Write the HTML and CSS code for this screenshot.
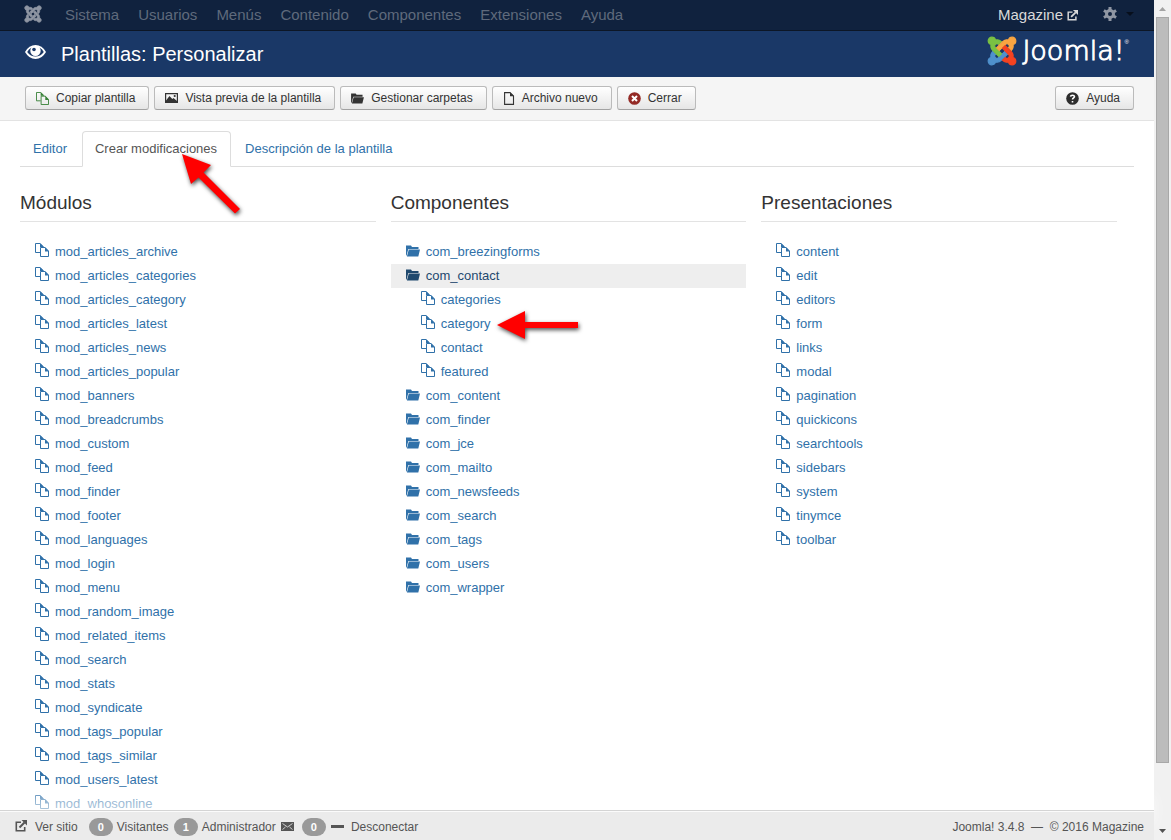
FILE: index.html
```html
<!DOCTYPE html>
<html lang="es">
<head>
<meta charset="utf-8">
<title>Plantillas: Personalizar</title>
<link rel="stylesheet" href="styles.css">
</head>
<body>
<svg class="sprite" aria-hidden="true">
  <defs><path id="arm" d="M16.719 14.759L14.22 17.26l-2.37 2.37-.462.466c-1.368 1.365-3.297 1.83-5.047 1.397-.327 1.424-1.604 2.49-3.13 2.49C1.438 23.983 0 22.547 0 20.772c0-1.518 1.055-2.789 2.469-3.123-.446-1.76.016-3.705 1.396-5.08l.179-.18 2.37 2.37-.184.181c-.769.779-.769 2.024 0 2.789.771.78 2.022.78 2.787 0l.465-.465 2.367-2.371 2.502-2.506z"/></defs>
  <symbol id="copy" viewBox="0 0 14 14"><path fill="none" stroke="currentColor" d="M5 9.500H.5v-9h4.500L8 3.500M5.500 13.500v-9H10l3.500 3.500v5.500z"/><path fill="currentColor" d="M5 0l4 4H5zM10 4l4 4.500h-4z"/></symbol>
  <symbol id="folder" viewBox="0 0 14 12"><path fill="currentColor" d="M0 .5h5l1 1.500h6.500V4H2.300L.6 10.500H0zM2.800 4.600H14L12.300 11.500H.9z"/></symbol>
  <symbol id="out" viewBox="0 0 12 12"><path fill="none" stroke="currentColor" stroke-width="1.600" d="M6 2.300H1.300v8.400h8.400V7"/><path fill="none" stroke="currentColor" stroke-width="2" d="M4.500 7.500L9.500 2.500"/><path fill="currentColor" d="M6.500 0H12v5.500z"/></symbol>
</svg>
<div class="window">
  <div class="page">
    <nav class="navbar">
      <a class="brand" href="#" aria-label="Joomla"><svg width="18" height="18" viewBox="-1 -1 26 26"><use href="#arm"/><use href="#arm" transform="rotate(90 12 12)"/><use href="#arm" transform="rotate(180 12 12)"/><use href="#arm" transform="rotate(270 12 12)"/></svg></a>
      <div class="menu"><a href="#">Sistema</a><a href="#">Usuarios</a><a href="#">Menús</a><a href="#">Contenido</a><a href="#">Componentes</a><a href="#">Extensiones</a><a href="#">Ayuda</a></div>
      <a class="site" href="#">Magazine <svg width="11" height="11"><use href="#out"/></svg></a>
      <button class="gear" aria-label="Usuario"><svg width="14" height="14" viewBox="0 0 14 14"><path fill="none" stroke="currentColor" stroke-width="3" d="M7 3.500a3.500 3.500 0 1 0 0 7 3.500 3.500 0 0 0 0-7z"/><path fill="none" stroke="currentColor" stroke-width="3" d="M7 0v3M7 11v3M.9 3.500l2.600 1.500M10.500 9l2.600 1.500M.9 10.500L3.500 9M10.500 5l2.600-1.500"/></svg><svg class="caret" width="8" height="4" viewBox="0 0 8 4"><path d="M0 0h8L4 4z"/></svg></button>
    </nav>
    <header class="header">
      <svg class="eye" width="21" height="14" viewBox="0 0 21 14"><path fill="#fff" d="M0 7Q4 0 10.500 0T21 7Q17 14 10.500 14T0 7z"/><path fill="#1a3867" d="M6.500 2.500Q3.500 4 2.200 7q3.300 4.500 8.300 4.500T18.800 7Q17.500 4 14.500 2.500q1.200 1.500 1.200 3.200a5.200 5.200 0 0 1-10.400 0q0-1.700 1.200-3.200z"/><circle cx="9" cy="4.500" r="1.800" fill="#1a3867"/></svg>
      <h1>Plantillas: Personalizar</h1>
      <div class="logo"><svg class="mark" width="30" height="30" viewBox="-1 -1 26 26"><use href="#arm" color="#4f91cd"/><use href="#arm" color="#7ac143" transform="rotate(90 12 12)"/><use href="#arm" color="#f9a541" transform="rotate(180 12 12)"/><use href="#arm" color="#f44321" transform="rotate(270 12 12)"/></svg><span>Joomla!</span><sup>®</sup></div>
    </header>
    <div class="toolbar">
      <button><svg class="green" width="13" height="13"><use href="#copy"/></svg>Copiar plantilla</button>
      <button><svg width="13" height="10" viewBox="0 0 13 10"><path fill="none" stroke="currentColor" stroke-width="1.200" d="M.6.6h11.800v8.800H.6z"/><path fill="currentColor" d="M1 9V7.500L4.500 3l2.800 3 1.200-1L12 8v1z"/><circle cx="9.700" cy="3" r="1.100" fill="currentColor"/></svg>Vista previa de la plantilla</button>
      <button><svg width="13" height="11"><use href="#folder"/></svg>Gestionar carpetas</button>
      <button><svg width="12" height="13" viewBox="0 0 12 13"><path fill="none" stroke="currentColor" stroke-width="1.100" d="M1.600.6H7L10.500 4v8.400H1.600z"/><path fill="currentColor" d="M7 .2L11 4.200H7z"/></svg>Archivo nuevo</button>
      <button><svg width="13" height="13" viewBox="0 0 13 13"><circle cx="6.500" cy="6.500" r="6.300" fill="#942a25"/><path stroke="#fff" stroke-width="2" d="M4 4l5 5M9 4L4 9"/></svg>Cerrar</button>
      <button class="help"><svg width="13" height="13" viewBox="0 0 13 13"><circle cx="6.500" cy="6.500" r="6.300" fill="#2d2d2d"/><path fill="none" stroke="#fff" stroke-width="1.600" d="M4.500 4.700q.2-1.400 2-1.400t2 1.300c0 1.300-2 1.300-2 3M6.500 8.900v1.500"/></svg>Ayuda</button>
    </div>
    <main class="content">
      <div class="tabs">
        <a href="#">Editor</a>
        <a href="#" class="active">Crear modificaciones<svg class="arrow arrow-tab" width="70" height="70" viewBox="0 0 70 70"><path fill="red" d="M3 3L32 14 24.500 21.500 61 58 56 62.500 19.500 26.500 12 33z"/></svg></a>
        <a href="#">Descripción de la plantilla</a>
      </div>
      <div class="columns">
        <section>
          <h2>Módulos</h2>
          <ul>
            <li><a href="#"><svg><use href="#copy"/></svg>mod_articles_archive</a></li>
            <li><a href="#"><svg><use href="#copy"/></svg>mod_articles_categories</a></li>
            <li><a href="#"><svg><use href="#copy"/></svg>mod_articles_category</a></li>
            <li><a href="#"><svg><use href="#copy"/></svg>mod_articles_latest</a></li>
            <li><a href="#"><svg><use href="#copy"/></svg>mod_articles_news</a></li>
            <li><a href="#"><svg><use href="#copy"/></svg>mod_articles_popular</a></li>
            <li><a href="#"><svg><use href="#copy"/></svg>mod_banners</a></li>
            <li><a href="#"><svg><use href="#copy"/></svg>mod_breadcrumbs</a></li>
            <li><a href="#"><svg><use href="#copy"/></svg>mod_custom</a></li>
            <li><a href="#"><svg><use href="#copy"/></svg>mod_feed</a></li>
            <li><a href="#"><svg><use href="#copy"/></svg>mod_finder</a></li>
            <li><a href="#"><svg><use href="#copy"/></svg>mod_footer</a></li>
            <li><a href="#"><svg><use href="#copy"/></svg>mod_languages</a></li>
            <li><a href="#"><svg><use href="#copy"/></svg>mod_login</a></li>
            <li><a href="#"><svg><use href="#copy"/></svg>mod_menu</a></li>
            <li><a href="#"><svg><use href="#copy"/></svg>mod_random_image</a></li>
            <li><a href="#"><svg><use href="#copy"/></svg>mod_related_items</a></li>
            <li><a href="#"><svg><use href="#copy"/></svg>mod_search</a></li>
            <li><a href="#"><svg><use href="#copy"/></svg>mod_stats</a></li>
            <li><a href="#"><svg><use href="#copy"/></svg>mod_syndicate</a></li>
            <li><a href="#"><svg><use href="#copy"/></svg>mod_tags_popular</a></li>
            <li><a href="#"><svg><use href="#copy"/></svg>mod_tags_similar</a></li>
            <li><a href="#"><svg><use href="#copy"/></svg>mod_users_latest</a></li>
            <li><a href="#"><svg><use href="#copy"/></svg>mod_whosonline</a></li>
          </ul>
        </section>
        <section>
          <h2>Componentes</h2>
          <ul>
            <li><a href="#" class="dir"><svg><use href="#folder"/></svg>com_breezingforms</a></li>
            <li><a href="#" class="dir open"><svg><use href="#folder"/></svg>com_contact</a>
              <ul class="nested">
                <li><a href="#"><svg><use href="#copy"/></svg>categories</a></li>
                <li><a href="#"><svg><use href="#copy"/></svg>category<span class="anchor"><svg class="arrow arrow-item" width="90" height="36" viewBox="0 0 90 36"><path fill="red" d="M3 18L31 4v11h53v6H31v11z"/></svg></span></a></li>
                <li><a href="#"><svg><use href="#copy"/></svg>contact</a></li>
                <li><a href="#"><svg><use href="#copy"/></svg>featured</a></li>
              </ul>
            </li>
            <li><a href="#" class="dir"><svg><use href="#folder"/></svg>com_content</a></li>
            <li><a href="#" class="dir"><svg><use href="#folder"/></svg>com_finder</a></li>
            <li><a href="#" class="dir"><svg><use href="#folder"/></svg>com_jce</a></li>
            <li><a href="#" class="dir"><svg><use href="#folder"/></svg>com_mailto</a></li>
            <li><a href="#" class="dir"><svg><use href="#folder"/></svg>com_newsfeeds</a></li>
            <li><a href="#" class="dir"><svg><use href="#folder"/></svg>com_search</a></li>
            <li><a href="#" class="dir"><svg><use href="#folder"/></svg>com_tags</a></li>
            <li><a href="#" class="dir"><svg><use href="#folder"/></svg>com_users</a></li>
            <li><a href="#" class="dir"><svg><use href="#folder"/></svg>com_wrapper</a></li>
          </ul>
        </section>
        <section>
          <h2>Presentaciones</h2>
          <ul>
            <li><a href="#"><svg><use href="#copy"/></svg>content</a></li>
            <li><a href="#"><svg><use href="#copy"/></svg>edit</a></li>
            <li><a href="#"><svg><use href="#copy"/></svg>editors</a></li>
            <li><a href="#"><svg><use href="#copy"/></svg>form</a></li>
            <li><a href="#"><svg><use href="#copy"/></svg>links</a></li>
            <li><a href="#"><svg><use href="#copy"/></svg>modal</a></li>
            <li><a href="#"><svg><use href="#copy"/></svg>pagination</a></li>
            <li><a href="#"><svg><use href="#copy"/></svg>quickicons</a></li>
            <li><a href="#"><svg><use href="#copy"/></svg>searchtools</a></li>
            <li><a href="#"><svg><use href="#copy"/></svg>sidebars</a></li>
            <li><a href="#"><svg><use href="#copy"/></svg>system</a></li>
            <li><a href="#"><svg><use href="#copy"/></svg>tinymce</a></li>
            <li><a href="#"><svg><use href="#copy"/></svg>toolbar</a></li>
          </ul>
        </section>
      </div>
    </main>
    <footer class="status">
      <a class="view" href="#"><svg width="12" height="12"><use href="#out"/></svg>Ver sitio</a>
      <span class="count"><b>0</b>Visitantes</span>
      <span class="count"><b>1</b>Administrador</span>
      <a class="mail" href="#"><svg width="13" height="9" viewBox="0 0 13 9"><path fill="#555" d="M0 0h13v9H0z"/><path fill="none" stroke="#ebebeb" stroke-width=".8" d="M1.500 1.500l5 3.500 5-3.500M1.500 7.500l3-2.500M11.500 7.500l-3-2.500"/></svg><b>0</b></a>
      <a class="logout" href="#"><svg width="13" height="3" viewBox="0 0 13 3"><path fill="#555" d="M0 0h13v3H0z"/></svg>Desconectar</a>
      <span class="version">Joomla! 3.4.8 &nbsp;—&nbsp; © 2016 Magazine</span>
    </footer>
  </div>
  <div class="scrollbar" aria-hidden="true">
    <svg width="7" height="4" viewBox="0 0 7 4"><path fill="#a3a3a3" d="M0 4h7L3.500 0z"/></svg>
    <div class="track"><div class="thumb"></div></div>
    <svg width="7" height="4" viewBox="0 0 7 4"><path fill="#505050" d="M0 0h7L3.500 4z"/></svg>
  </div>
</div>
</body>
</html>
```
FILE: styles.css
```css
* { box-sizing: border-box; }
body {
  margin: 0;
  font: 13px/18px "Liberation Sans", Arial, sans-serif;
  color: #333;
  background: #fff;
}
a { color: #3071a9; text-decoration: none; }
svg { flex: none; }
button { font: inherit; cursor: pointer; }
h1, h2 { margin: 0; font-weight: normal; }
ul { margin: 0; padding: 0; list-style: none; }
.sprite { position: absolute; width: 0; height: 0; }

.window { display: flex; height: 100vh; overflow: hidden; }
.page { flex: 1; min-width: 0; display: flex; flex-direction: column; }

.navbar {
  flex: none;
  display: flex;
  align-items: center;
  height: 31px;
  padding: 0 20px 0 24px;
  background: #10223e;
  border-bottom: 1px solid #0c1626;
  font-size: 15px;
}
.brand { display: flex; margin: 0 23px 2px 0; fill: #8f96a3; stroke: #8f96a3; stroke-width: 1; }
.menu { display: flex; gap: 19px; }
.menu a { color: #5f6a7c; }
.site { display: flex; align-items: center; gap: 4px; margin-left: auto; color: #d9d9d9; }
.gear {
  display: flex;
  align-items: center;
  gap: 9px;
  margin: 0 0 2px 25px;
  padding: 0;
  border: 0;
  background: none;
  color: #8f96a3;
}
.caret { fill: #070f1c; }

.header {
  flex: none;
  display: flex;
  align-items: center;
  height: 46px;
  padding: 0 25px;
  background: #1a3867;
  color: #fff;
}
.eye { margin: 0 15px 4px 0; }
.header h1 { font-size: 20px; line-height: 30px; }
.logo { display: flex; align-items: center; height: 40px; margin-left: auto; padding-bottom: 6px; }
.mark use { fill: currentColor; stroke: currentColor; stroke-width: 1; }
.logo span {
  margin-left: 5px;
  font: 200 27px/30px "DejaVu Sans", sans-serif;
  -webkit-text-stroke: 1px #fff;
}
.logo sup { align-self: flex-start; font-size: 6px; line-height: 16px; }

.toolbar {
  flex: none;
  display: flex;
  gap: 5px;
  height: 44px;
  padding: 9px 20px 9px 25px;
  background: #f5f5f5;
  border-bottom: 1px solid #e3e3e3;
}
.toolbar button {
  display: flex;
  align-items: center;
  gap: 7px;
  height: 24px;
  padding: 0 13px 0 10px;
  border: 1px solid #bbb;
  border-bottom-color: #a2a2a2;
  border-radius: 3px;
  background: linear-gradient(#fff, #e6e6e6);
  color: #333;
  font-size: 12px;
}
.toolbar .green { color: #378137; }
.toolbar .help { margin-left: auto; }

.content { flex: 1; min-height: 0; padding: 10px 20px 0; }
.tabs { display: flex; height: 36px; border-bottom: 1px solid #ddd; }
.tabs a { position: relative; height: 36px; padding: 8px 13px 8px 12px; border: 1px solid transparent; }
.tabs a + a { margin-left: 1px; }
.tabs .active {
  border-color: #ddd #ddd #fff;
  border-radius: 4px 4px 0 0;
  background: #fff;
  color: #555;
}
.arrow { position: absolute; z-index: 2; filter: drop-shadow(1px 2px 2px rgba(0, 0, 0, .7)); }
.arrow-tab { top: 19px; left: 96px; }

.columns {
  display: grid;
  grid-template-columns: repeat(3, minmax(0, 1fr));
  gap: 15px;
  padding: 18px 17px 0 0;
}
h2 {
  height: 37px;
  margin-bottom: 18px;
  border-bottom: 1px solid #e3e3e3;
  font-size: 19px;
  line-height: 36px;
}
li a { display: flex; align-items: center; height: 24px; padding-left: 15px; }
li a > svg { width: 14px; height: 14px; margin: 0 6px 4px 0; }
.dir > svg { margin-bottom: 2px; }
.open { background: #eee; color: #1f496e; }
.nested a { padding-left: 30px; }
.anchor { position: relative; }
.arrow-item { top: -17px; left: 3px; }

.status {
  position: relative;
  flex: none;
  display: flex;
  align-items: center;
  height: 30px;
  padding: 3px 10px 0 15px;
  border-top: 1px solid #d4d4d4;
  background: #ebebeb;
  box-shadow: 0 1px 0 rgba(255, 255, 255, .8) inset, 0 -15px 15px rgba(255, 255, 255, .6);
  color: #555;
  font-size: 12px;
}
.status a { color: #555; }
.status a, .count { display: flex; align-items: center; }
.status b {
  padding: 0 9px;
  border-radius: 9px;
  background: #999;
  color: #fff;
  font-size: 11px;
}
.status svg { margin-bottom: 2px; }
.view { gap: 8px; margin-right: 11px; }
.count { gap: 4px; margin-right: 5px; }
.mail { gap: 8px; }
.logout { gap: 7px; margin-left: 5px; }
.version { margin-left: auto; }

.scrollbar {
  flex: none;
  display: flex;
  flex-direction: column;
  align-items: center;
  width: 17px;
  padding: 7px 0;
  background: #f1f1f1;
}
.track { flex: 1; width: 13px; padding: 6px 0; }
.thumb { height: calc(100% - 60px); border: 1px solid #a8a8a8; background: #bcbcbc; }
```
